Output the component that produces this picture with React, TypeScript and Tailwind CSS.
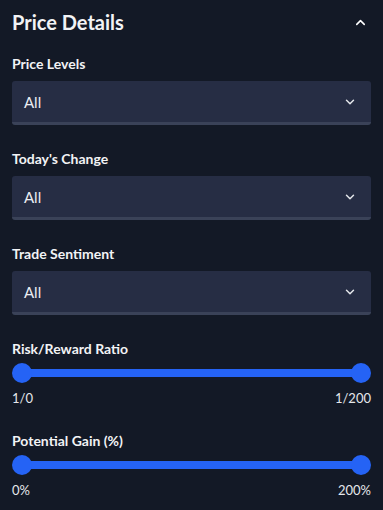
import React from 'react';
import { ChevronDown, ChevronUp } from 'lucide-react';

const selects = ['Price Levels', "Today's Change", 'Trade Sentiment'];

const sliders = [
  { label: 'Risk/Reward Ratio', min: '1/0', max: '1/200' },
  { label: 'Potential Gain (%)', min: '0%', max: '200%' },
];

const App = () => {
  return (
    <div
      className="w-[383px] h-[510px] bg-[#131926] text-[#f2f3f5] px-3 flex flex-col overflow-hidden"
      style={{ fontFamily: "Lato, 'Noto Sans', sans-serif" }}
    >
      {/* Header */}
      <div className="flex items-center justify-between h-[44px] shrink-0">
        <h2 className="text-[20px] font-bold leading-none">Price Details</h2>
        <ChevronUp size={15} strokeWidth={2.5} className="mr-[3px] text-white" />
      </div>

      {/* Select filters */}
      {selects.map((label) => (
        <div key={label} className="pt-[10px] pb-[14px]">
          <div className="text-[14px] font-bold leading-[19px] mb-[8px]">{label}</div>
          <button className="w-full h-[44px] flex items-center justify-between px-3 bg-[#262d44] rounded-[3px] border-b-[3px] border-[#3a4258]">
            <span className="text-[15px] text-[#eceef2] pt-[2px]">All</span>
            <ChevronDown size={14} strokeWidth={2.5} className="mr-[2px] text-[#e5e7eb]" />
          </button>
        </div>
      ))}

      {/* Range sliders */}
      {sliders.map((s) => (
        <div key={s.label} className="pt-[10px] pb-[14px]">
          <div className="text-[14px] font-bold leading-[19px]">{s.label}</div>
          <div className="relative h-[20px] mt-[5px] flex items-center">
            <div className="w-full h-[8px] mx-[10px] bg-[#2563f5]" />
            <span className="absolute left-0 top-0 w-[20px] h-[20px] rounded-full bg-[#2563f5]" />
            <span className="absolute right-0 top-0 w-[20px] h-[20px] rounded-full bg-[#2563f5]" />
          </div>
          <div className="flex justify-between text-[13px] text-[#e5e7eb] mt-[6px] leading-[18px]">
            <span>{s.min}</span>
            <span>{s.max}</span>
          </div>
        </div>
      ))}
    </div>
  );
};

export default App;
